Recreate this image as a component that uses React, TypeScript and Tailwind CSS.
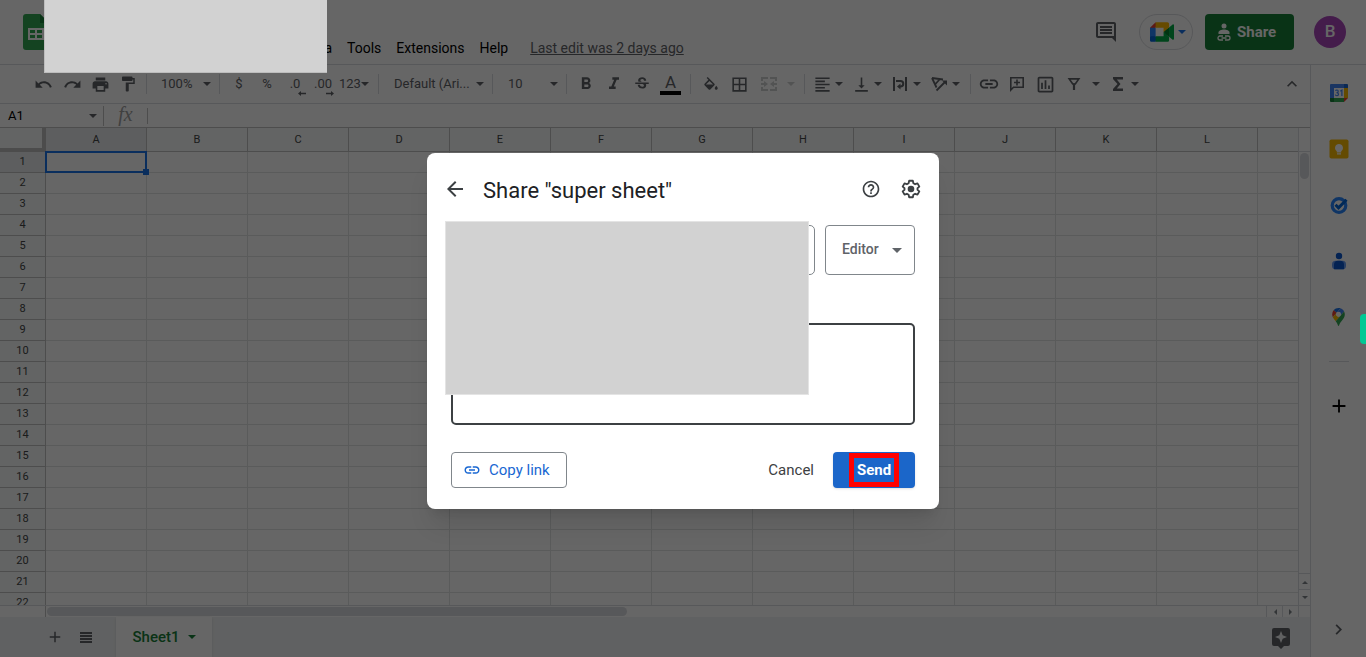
import React from "react";
import {
  MdAdd,
  MdArrowBack,
  MdBorderAll,
  MdChevronRight,
  MdFormatAlignLeft,
  MdFormatBold,
  MdFormatItalic,
  MdFormatPaint,
  MdHelpOutline,
  MdKeyboardArrowUp,
  MdLink,
  MdOutlineInsertChart,
  MdPrint,
  MdRedo,
  MdStrikethroughS,
  MdUndo,
  MdVerticalAlignBottom,
} from "react-icons/md";

const COLUMNS = ["A", "B", "C", "D", "E", "F", "G", "H", "I", "J", "K", "L"];
const ROWS = Array.from({ length: 22 }, (_, i) => i + 1);

function Caret({ className = "" }: { className?: string }) {
  return (
    <svg viewBox="0 0 8 4" className={`h-1 w-2 shrink-0 ${className}`} fill="currentColor" aria-hidden="true">
      <path d="M0 0h8L4 4z" />
    </svg>
  );
}

function SheetsLogo() {
  return (
    <svg viewBox="0 0 26 36" className="h-9 w-[26px]" aria-hidden="true">
      <path fill="#34a853" d="M3 0h14l9 9v24a3 3 0 0 1-3 3H3a3 3 0 0 1-3-3V3a3 3 0 0 1 3-3z" />
      <path fill="#188038" d="M17 0l9 9h-9z" />
      <path fill="#fff" fillRule="evenodd" d="M5 14h16v12H5zm2 2v3h5v-3zm7 0v3h5v-3zm-7 5v3h5v-3zm7 0v3h5v-3z" />
    </svg>
  );
}

function MeetLogo() {
  return (
    <svg viewBox="0 0 87.5 72" className="h-5 w-6" aria-hidden="true">
      <path fill="#00832d" d="M49.5 36l8.53 9.75 11.47 7.33 2-17.02-2-16.64-11.69 6.44z" />
      <path fill="#0066da" d="M0 51.5V66c0 3.315 2.685 6 6 6h14.5l3-10.96-3-9.54-9.95-3z" />
      <path fill="#e94235" d="M20.5 0L0 20.5l10.55 3 9.95-3 2.95-9.41z" />
      <path fill="#2684fc" d="M20.5 20.5H0v31h20.5z" />
      <path fill="#00ac47" d="M82.6 8.68L69.5 19.42v33.66l13.16 10.79c1.97 1.54 4.85.135 4.85-2.37V11c0-2.535-2.945-3.925-4.91-2.32zM49.5 36v15.5h-29V72h43c3.315 0 6-2.685 6-6V53.08z" />
      <path fill="#ffba00" d="M63.5 0h-43v20.5h29V36l20-16.57V6c0-3.315-2.685-6-6-6z" />
    </svg>
  );
}

function CommentHistoryIcon() {
  return (
    <svg viewBox="0 0 24 24" className="size-6" fill="currentColor" aria-hidden="true">
      <path fillRule="evenodd" d="M21.99 4c0-1.1-.89-2-1.99-2H4c-1.1 0-2 .9-2 2v12c0 1.1.9 2 2 2h14l4 4zM20 4v12H4V4zM6 12h12v2H6zm0-3h12v2H6zm0-3h12v2H6z" />
    </svg>
  );
}

function ShareLinkIcon() {
  return (
    <svg viewBox="0 0 14 18" className="h-[18px] w-3.5" fill="none" stroke="currentColor" aria-hidden="true">
      <circle cx="7" cy="3" r="2.5" fill="currentColor" stroke="none" />
      <path fill="currentColor" stroke="none" d="M1.5 11V9.5C1.5 7.6 4.5 6.6 7 6.6s5.5 1 5.5 2.9V11z" />
      <path strokeWidth="1.3" d="M6 13H3a2 2 0 0 0 0 4h3M8 13h3a2 2 0 0 1 0 4H8M4.5 15h5" />
    </svg>
  );
}

function FillIcon() {
  return (
    <svg viewBox="0 0 24 20" className="h-[15px] w-[18px]" fill="currentColor" aria-hidden="true">
      <path d="M16.56 8.94L7.62 0 6.21 1.41l2.38 2.38-5.15 5.15c-.59.59-.59 1.54 0 2.12l5.5 5.5c.29.29.68.44 1.06.44s.77-.15 1.06-.44l5.5-5.5c.59-.58.59-1.53 0-2.12zM5.21 10L10 5.21 14.79 10zM19 11.5s-2 2.17-2 3.5c0 1.1.9 2 2 2s2-.9 2-2c0-1.33-2-3.5-2-3.5z" />
    </svg>
  );
}

function MergeIcon() {
  return (
    <svg viewBox="0 0 18 16" className="h-4 w-[18px]" fill="currentColor" aria-hidden="true">
      <path d="M1 1h7v2H3v2H1zM10 1h7v4h-2V3h-5zM1 11h2v2h5v2H1zM15 11h2v4h-7v-2h5z" />
      <path d="M1 7h3V5l4 3-4 3V9H1zM17 7h-3V5l-4 3 4 3V9h3z" />
    </svg>
  );
}

function WrapIcon() {
  return (
    <svg viewBox="0 0 16 16" className="size-4" fill="none" stroke="currentColor" strokeWidth="2" aria-hidden="true">
      <path d="M2 1v14M14 1v14M4 5h4.5a2.5 2.5 0 0 1 0 5.5H7" />
      <path d="M8.5 7.5v6l-3.5-3z" fill="currentColor" stroke="none" />
    </svg>
  );
}

function RotateIcon() {
  return (
    <svg viewBox="0 0 18 18" className="size-[18px]" fill="none" stroke="currentColor" strokeWidth="1.8" aria-hidden="true">
      <path d="M2 3l11 1.5M2 3l4.5 9.5M9.5 4.5L5 9.5" />
      <path d="M6.5 15.5L15 7" />
      <path d="M12 5.5h5v5z" fill="currentColor" stroke="none" />
    </svg>
  );
}

function AddCommentIcon() {
  return (
    <svg viewBox="0 0 16 16" className="size-4" fill="none" stroke="currentColor" strokeWidth="1.6" aria-hidden="true">
      <path d="M1.8 14V1.8h12.4v9.4H4.5zM8 3.5v6M5 6.5h6" />
    </svg>
  );
}

function FilterIcon() {
  return (
    <svg viewBox="0 0 14 14" className="size-3.5" fill="none" stroke="currentColor" strokeWidth="1.7" aria-hidden="true">
      <path d="M2.2 1.9h9.6L8.3 7H5.7z" />
      <path d="M7 6.5V13" strokeWidth="2.2" />
    </svg>
  );
}

function SumIcon() {
  return (
    <svg viewBox="0 0 12 14" className="h-3.5 w-3" fill="currentColor" aria-hidden="true">
      <path d="M1 0h10v2.5H4.8L8.5 7l-3.7 4.5H11V14H1v-2l4.5-5L1 2z" />
    </svg>
  );
}

function GearIcon() {
  return (
    <svg viewBox="0 0 24 24" className="size-[22px]" fill="none" stroke="currentColor" aria-hidden="true">
      <path
        strokeWidth="2"
        strokeLinejoin="round"
        d="M10 3h4l.6 2.700 1.900 1.100 2.600-.9 2 3.500-2 1.700v1.800l2 1.700-2 3.500-2.600-.9-1.900 1.100L14 21h-4l-.6-2.700-1.900-1.100-2.600.9-2-3.500 2-1.700v-1.800l-2-1.700 2-3.500 2.600.9 1.900-1.100z"
      />
      <circle cx="12" cy="12" r="3.6" fill="currentColor" stroke="none" />
    </svg>
  );
}

function CalendarLogo() {
  return (
    <svg viewBox="0 0 20 20" className="size-5" aria-hidden="true">
      <path fill="#4285f4" d="M2 1h13v4H5v10H1V2a1 1 0 0 1 1-1z" />
      <path fill="#1967d2" d="M15 1h3a1 1 0 0 1 1 1v3h-4z" />
      <path fill="#fbbc04" d="M15 5h4v10h-4z" />
      <path fill="#34a853" d="M5 15h10v4H5z" />
      <path fill="#188038" d="M1 15h4v4H2a1 1 0 0 1-1-1z" />
      <path fill="#ea4335" d="M15 15h4l-4 4z" />
      <path fill="#fff" d="M5 5h10v10H5z" />
      <path fill="none" stroke="#4285f4" strokeWidth="1.2" d="M6.5 7.8c.4-1 2.7-1.2 2.7.4 0 1.1-1 1.5-1.7 1.5 1 0 2 .5 2 1.6 0 1.9-2.8 1.8-3.200.4M11.300 8.200l1.600-1.100v6" />
    </svg>
  );
}

function KeepLogo() {
  return (
    <svg viewBox="0 0 20 20" className="size-5" aria-hidden="true">
      <rect x="0.5" y="0.5" width="19" height="19" rx="1.8" fill="#fbbc04" />
      <path fill="#fff" d="M10 5a4 4 0 0 0-2.200 7.300V13.500h4.400v-1.200A4 4 0 0 0 10 5zM8 14.300h4v1.300H8z" />
    </svg>
  );
}

function TasksLogo() {
  return (
    <svg viewBox="0 0 20 20" className="size-5" fill="none" aria-hidden="true">
      <circle cx="10" cy="10.5" r="6.8" stroke="#2684fc" strokeWidth="3.2" />
      <path d="M6.5 9.8l3 3 8-8" stroke="#0066da" strokeWidth="3" />
    </svg>
  );
}

function ContactsLogo() {
  return (
    <svg viewBox="0 0 20 20" className="size-5" aria-hidden="true">
      <circle cx="10" cy="5" r="3.2" fill="#0b57d0" />
      <rect x="3" y="9.8" width="14" height="8.5" rx="3.5" fill="#669df6" />
      <path fill="#0b57d0" d="M5 18.3v-4.500a4 4 0 0 1 4-4h2a4 4 0 0 1 4 4v4.500z" />
    </svg>
  );
}

function MapsLogo() {
  return (
    <svg viewBox="0 0 92.3 132.3" className="h-[18px] w-[13px]" aria-hidden="true">
      <path fill="#1a73e8" d="M60.2 2.2C55.8.8 51 0 46.1 0 32 0 19.3 6.4 10.8 16.5l21.8 18.3z" />
      <path fill="#ea4335" d="M10.8 16.5C4.1 24.5 0 34.9 0 46.1c0 8.7 1.7 15.7 4.6 22l28-33.3z" />
      <path fill="#4285f4" d="M46.2 28.5c9.8 0 17.7 7.9 17.7 17.7 0 4.3-1.6 8.3-4.2 11.4 0 0 13.9-16.6 27.5-32.7-5.6-10.8-15.3-19-27-22.7L32.6 34.8c3.3-3.8 8.1-6.3 13.6-6.3" />
      <path fill="#fbbc04" d="M46.2 63.8c-9.8 0-17.7-7.9-17.7-17.7 0-4.3 1.5-8.3 4.1-11.3l-28 33.3c4.8 10.6 12.8 19.2 21 29.9l34.1-40.5c-3.3 3.9-8.1 6.3-13.5 6.3" />
      <path fill="#34a853" d="M59.1 109.2c15.4-24.1 33.3-35 33.3-63 0-7.7-1.9-14.9-5.2-21.3L25.6 98c2.6 3.4 5.3 7.3 7.9 11.3 9.4 14.5 6.8 23.1 12.8 23.1s3.4-8.7 12.8-23.2" />
      <circle cx="46.2" cy="46" r="17.7" fill="#fff" />
    </svg>
  );
}

function ToolButton({ label, wide, faded, children }: { label: string; wide?: boolean; faded?: boolean; children: React.ReactNode }) {
  return (
    <button
      type="button"
      aria-label={label}
      className={`flex h-7 shrink-0 items-center justify-center ${wide ? "w-[29px]" : "w-7"} ${faded ? "opacity-30" : ""}`}
    >
      {children}
    </button>
  );
}

function DropButton({ label, children }: { label: string; children: React.ReactNode }) {
  return (
    <button type="button" aria-label={label} className="flex h-7 w-[39px] shrink-0 items-center">
      <span className="flex w-6 items-center justify-center">{children}</span>
      <Caret className="ml-px" />
    </button>
  );
}

function PickerButton({ label, value, wide }: { label: string; value: string; wide?: boolean }) {
  return (
    <button
      type="button"
      aria-label={label}
      className={`flex h-7 shrink-0 items-center justify-between pr-[3px] pl-2.5 ${wide ? "w-[103px]" : "w-[63px]"}`}
    >
      {value}
      <Caret />
    </button>
  );
}

function Divider({ tight }: { tight?: boolean }) {
  return <span className={`h-5 w-px shrink-0 bg-[#dadce0] ${tight ? "mx-1" : "mx-[5px]"}`} />;
}

function Header() {
  return (
    <header className="flex h-[65px] shrink-0 items-start border-b border-[#dadce0] pr-5 pl-[23px]">
      <div className="pt-3.5">
        <SheetsLogo />
      </div>
      <nav className="flex h-[60px] items-end gap-px pl-[247px] text-[14px] leading-6 whitespace-nowrap text-black" aria-label="Menu">
        {["Data", "Tools", "Extensions", "Help"].map((item) => (
          <button type="button" key={item} className="h-6 px-[7px]">
            {item}
          </button>
        ))}
        <a href="#history" className="ml-3.5 h-6 text-[#5f6368] underline">
          Last edit was 2 days ago
        </a>
      </nav>
      <div className="ml-auto flex h-16 items-center text-[#5f6368]">
        <button type="button" aria-label="Comment history" className="mr-[21px]">
          <CommentHistoryIcon />
        </button>
        <button type="button" aria-label="Join a call" className="mr-3 flex h-9 w-[54px] items-center gap-1 rounded-full border border-[#dadce0] pl-2.5 text-[#1a73e8]">
          <MeetLogo />
          <Caret />
        </button>
        <button type="button" className="mr-5 flex h-9 w-[89px] items-center gap-1.5 rounded bg-[#188038] pl-3 text-[15px] font-bold text-white">
          <ShareLinkIcon />
          Share
        </button>
        <button type="button" aria-label="Account" className="flex size-8 items-center justify-center rounded-full bg-[#ab47bc] text-[17px] font-medium text-white">
          B
        </button>
      </div>
    </header>
  );
}

function Toolbar() {
  return (
    <div role="toolbar" className="flex h-[39px] shrink-0 items-center overflow-hidden border-b border-[#dadce0] pr-2 pl-[29px] text-[13px] text-[#5f6368]">
      <ToolButton label="Undo" wide><MdUndo size={19} /></ToolButton>
      <ToolButton label="Redo"><MdRedo size={19} /></ToolButton>
      <ToolButton label="Print"><MdPrint size={19} /></ToolButton>
      <ToolButton label="Paint format"><MdFormatPaint size={18} /></ToolButton>
      <Divider tight />
      <PickerButton label="Zoom" value="100%" />
      <Divider />
      <ToolButton label="Currency">$</ToolButton>
      <ToolButton label="Percent">%</ToolButton>
      <ToolButton label="Fewer decimals">
        <span className="relative">
          .0
          <svg viewBox="0 0 8 5" className="absolute -right-1.5 bottom-0 h-[5px] w-2 translate-y-0.5" fill="currentColor" aria-hidden="true">
            <path d="M0 2.5L3 0v1.7h5v1.6H3V5z" />
          </svg>
        </span>
      </ToolButton>
      <ToolButton label="More decimals">
        <span className="relative">
          .00
          <svg viewBox="0 0 8 5" className="absolute -right-0.5 bottom-0 h-[5px] w-2 translate-y-0.5" fill="currentColor" aria-hidden="true">
            <path d="M8 2.5L5 0v1.7H0v1.6h5V5z" />
          </svg>
        </span>
      </ToolButton>
      <button type="button" className="flex h-7 w-9 shrink-0 items-center pl-0.5">
        123
        <Caret />
      </button>
      <Divider />
      <PickerButton label="Font" value="Default (Ari..." wide />
      <Divider />
      <PickerButton label="Font size" value="10" />
      <Divider />
      <ToolButton label="Bold"><MdFormatBold size={20} /></ToolButton>
      <ToolButton label="Italic"><MdFormatItalic size={20} /></ToolButton>
      <ToolButton label="Strikethrough"><MdStrikethroughS size={18} /></ToolButton>
      <ToolButton label="Text color" wide>
        <span className="flex w-[21px] flex-col items-center border-b-4 border-black text-[17px] leading-[18px]">A</span>
      </ToolButton>
      <Divider />
      <ToolButton label="Fill color" wide><FillIcon /></ToolButton>
      <ToolButton label="Borders" wide><MdBorderAll size={19} /></ToolButton>
      <ToolButton label="Merge cells" wide faded><MergeIcon /></ToolButton>
      <button type="button" aria-label="Merge type" className="flex h-7 w-4 shrink-0 items-center justify-center opacity-30">
        <Caret />
      </button>
      <Divider />
      <DropButton label="Horizontal align"><MdFormatAlignLeft size={19} /></DropButton>
      <DropButton label="Vertical align"><MdVerticalAlignBottom size={19} /></DropButton>
      <DropButton label="Text wrapping"><WrapIcon /></DropButton>
      <DropButton label="Text rotation"><RotateIcon /></DropButton>
      <Divider tight />
      <ToolButton label="Insert link"><MdLink size={22} /></ToolButton>
      <ToolButton label="Insert comment"><AddCommentIcon /></ToolButton>
      <ToolButton label="Insert chart"><MdOutlineInsertChart size={21} /></ToolButton>
      <button type="button" aria-label="Filter" className="flex h-7 w-[47px] shrink-0 items-center justify-between pr-1.5 pl-2">
        <FilterIcon />
        <Caret />
      </button>
      <DropButton label="Functions"><SumIcon /></DropButton>
      <button type="button" aria-label="Hide the menus" className="ml-auto shrink-0">
        <MdKeyboardArrowUp size={20} />
      </button>
    </div>
  );
}

function FormulaBar() {
  return (
    <div className="flex h-6 shrink-0 items-center border-b border-[#c0c0c0] text-[13px]">
      <button type="button" className="flex h-full w-[103px] items-center justify-between pr-1.5 pl-2 text-black">
        A1
        <Caret className="text-[#5f6368]" />
      </button>
      <span className="h-5 w-px bg-[#c0c0c0]" />
      <label htmlFor="formula" className="w-[43px] pb-1 text-center font-['Liberation_Serif',serif] text-[20px] leading-5 text-[#a0a0a0] italic">
        fx
      </label>
      <span className="h-4 w-px bg-[#c0c0c0]" />
      <input id="formula" type="text" className="h-full min-w-0 flex-1 px-2 outline-none" />
    </div>
  );
}

function Grid() {
  return (
    <table className="w-full min-w-[1290px] table-fixed border-separate border-spacing-0 text-[11px] text-[#444746]">
      <colgroup>
        <col className="w-[46px]" />
        {COLUMNS.map((c) => (
          <col key={c} className="w-[101px]" />
        ))}
        <col />
      </colgroup>
      <thead>
        <tr>
          <td className="h-6 border-r-4 border-b-4 border-[#bdbdbd] bg-[#f8f9fa] p-0" />
          {COLUMNS.map((c) => (
            <th
              key={c}
              scope="col"
              className={`h-6 border-r border-b border-[#c0c0c0] p-0 pt-0.5 font-normal ${c === "A" ? "bg-[#e8eaed]" : "bg-[#f8f9fa]"}`}
            >
              {c}
            </th>
          ))}
          <td className="h-6 border-b border-[#c0c0c0] bg-[#f8f9fa] p-0" />
        </tr>
      </thead>
      <tbody>
        {ROWS.map((r) => (
          <tr key={r}>
            <th
              scope="row"
              className={`h-[21px] border-r border-b border-[#c0c0c0] p-0 text-center leading-4 font-normal ${r === 1 ? "bg-[#e8eaed]" : "bg-[#f8f9fa]"}`}
            >
              {r}
            </th>
            {COLUMNS.map((c) =>
              r === 1 && c === "A" ? (
                <td key={c} className="relative h-[21px] border-r border-b border-[#e2e3e3] p-0">
                  <span className="absolute -inset-px border-2 border-[#1a73e8]">
                    <span className="absolute -right-1 -bottom-1 size-1.5 bg-[#1a73e8]" />
                  </span>
                </td>
              ) : (
                <td key={c} className="h-[21px] border-r border-b border-[#e2e3e3] p-0" />
              ),
            )}
            <td className="h-[21px] border-b border-[#e2e3e3] p-0" />
          </tr>
        ))}
      </tbody>
    </table>
  );
}

function ArrowCell({ label, d, tall }: { label: string; d: string; tall?: boolean }) {
  return (
    <button
      type="button"
      aria-label={label}
      className={`flex shrink-0 items-center justify-center border-[#dadce0] text-[#80868b] ${tall ? "h-4 w-full border-t" : "h-full w-4 border-l"}`}
    >
      <svg viewBox="0 0 6 6" className="size-1.5" fill="currentColor" aria-hidden="true">
        <path d={d} />
      </svg>
    </button>
  );
}

function SheetTabs() {
  return (
    <footer className="flex h-10 shrink-0 items-center bg-[#f1f3f4] pr-5 pl-[46px] text-[#5f6368]">
      <button type="button" aria-label="Add sheet"><MdAdd size={18} /></button>
      <button type="button" aria-label="All sheets" className="ml-3.5 w-4">
        <svg viewBox="0 0 12 11" className="mx-auto h-[11px] w-3" fill="currentColor" aria-hidden="true">
          <path d="M0 0h12v2H0zM0 3h12v2H0zM0 6h12v2H0zM0 9h12v2H0z" />
        </svg>
      </button>
      <button type="button" className="ml-[22px] flex h-full w-24 items-center justify-center gap-2 bg-white text-[15px] font-medium text-[#188038] shadow">
        Sheet1
        <Caret />
      </button>
      <button type="button" aria-label="Explore" className="ml-auto pt-0.5">
        <svg viewBox="0 0 18 21" className="h-[21px] w-[18px]" fill="currentColor" aria-hidden="true">
          <path fillRule="evenodd" d="M2 0h14a2 2 0 0 1 2 2v14a2 2 0 0 1-2 2h-4l-3 3-3-3H2a2 2 0 0 1-2-2V2a2 2 0 0 1 2-2zm7 3L7.3 7.3 3 9l4.3 1.7L9 15l1.7-4.3L15 9l-4.3-1.7z" />
        </svg>
      </button>
    </footer>
  );
}

function SidePanel() {
  const apps = [
    { name: "Calendar", logo: <CalendarLogo /> },
    { name: "Keep", logo: <KeepLogo /> },
    { name: "Tasks", logo: <TasksLogo /> },
    { name: "Contacts", logo: <ContactsLogo /> },
    { name: "Maps", logo: <MapsLogo /> },
  ];
  return (
    <aside className="flex w-14 shrink-0 flex-col items-center border-l border-[#dadce0]">
      {apps.map((app) => (
        <button type="button" key={app.name} aria-label={app.name} className="flex h-14 w-full items-center justify-center">
          {app.logo}
        </button>
      ))}
      <span className="my-4 h-px w-5 shrink-0 bg-[#dadce0]" />
      <button type="button" aria-label="Get add-ons" className="flex h-14 w-full items-center justify-center text-black">
        <MdAdd size={22} />
      </button>
      <button type="button" aria-label="Hide side panel" className="mt-auto flex h-14 w-full items-center justify-center text-[#5f6368]">
        <MdChevronRight size={21} />
      </button>
    </aside>
  );
}

function ShareDialog() {
  return (
    <div role="dialog" aria-labelledby="share-title" className="relative w-full max-w-lg rounded-lg bg-white pb-[21px] text-[#3c4043] shadow-xl">
      <div className="flex h-[72px] items-center gap-4 px-4">
        <button type="button" aria-label="Back" className="flex size-6 items-center justify-center">
          <MdArrowBack size={24} />
        </button>
        <h2 id="share-title" className="flex-1 pt-0.5 text-[22px] text-[#202124]">
          Share "super sheet"
        </h2>
        <button type="button" aria-label="Help" className="flex size-6 items-center justify-center">
          <MdHelpOutline size={20} />
        </button>
        <button type="button" aria-label="Settings" className="flex size-6 items-center justify-center">
          <GearIcon />
        </button>
      </div>
      <div className="px-6">
        <div className="flex h-[50px] gap-2.5">
          <input aria-label="Add people and groups" type="text" className="min-w-0 flex-1 rounded-[5px] border border-[#80868b] px-3" />
          <div className="relative w-[90px]">
            <select aria-label="Role" defaultValue="Editor" className="h-full w-full appearance-none rounded-[4px] border border-[#80868b] bg-transparent pb-0.5 pl-4 text-[14px] font-medium text-[#5f6368]">
              <option>Editor</option>
            </select>
            <svg viewBox="0 0 10 5" className="pointer-events-none absolute top-[23px] right-[13px] h-[5px] w-2.5 text-[#5f6368]" fill="currentColor" aria-hidden="true">
              <path d="M0 0h10L5 5z" />
            </svg>
          </div>
        </div>
        <textarea aria-label="Message" className="mt-12 block h-[102px] w-full resize-none rounded-[5px] border-2 border-[#3c4043] p-3" />
        <div className="mt-[27px] flex h-9 items-center text-[15px]">
          <button type="button" className="flex h-full w-[116px] items-center gap-2 rounded-[4px] border border-[#80868b] pl-[11px] text-[#1967d2]">
            <MdLink size={18} />
            Copy link
          </button>
          <button type="button" className="ml-auto h-full px-[19px]">
            Cancel
          </button>
          <button type="button" className="relative h-full w-[82px] rounded-[4px] bg-[#1b66c9] font-bold text-white shadow">
            Send
            <span className="absolute inset-x-4 inset-y-px border-[5px] border-[#ff0000]" />
          </button>
        </div>
      </div>
      <div className="absolute top-[68px] left-[18px] h-[174px] w-[364px] border border-[#e4e4e4] bg-[#d2d2d2]" />
    </div>
  );
}

export default function App() {
  return (
    <div className="relative flex h-screen flex-col overflow-hidden bg-white font-[Roboto,sans-serif]">
      <Header />
      <div className="flex min-h-0 flex-1">
        <main className="flex min-w-0 flex-1 flex-col">
          <Toolbar />
          <FormulaBar />
          <div className="flex min-h-0 flex-1">
            <div className="min-w-0 flex-1 overflow-hidden">
              <Grid />
            </div>
            <div className="flex w-3 shrink-0 flex-col items-center border-l border-[#dadce0]">
              <span className="h-6 w-full shrink-0 border-b border-[#dadce0]" />
              <span className="mt-px mb-auto h-[26px] w-[9px] rounded-full bg-[#dadce0]" />
              <ArrowCell label="Scroll up" d="M0 5h6L3 2z" tall />
              <ArrowCell label="Scroll down" d="M0 1h6L3 4z" tall />
            </div>
          </div>
          <div className="flex h-3 shrink-0 border-t border-[#dadce0]">
            <span className="w-[46px] border-r border-[#c0c0c0]" />
            <span className="my-px ml-px h-[9px] w-[580px] rounded-full bg-[#dadce0]" />
            <span className="flex-1" />
            <ArrowCell label="Scroll left" d="M5 0v6L2 3z" />
            <ArrowCell label="Scroll right" d="M1 0v6l3-3z" />
            <span className="w-3 border-l border-[#dadce0]" />
          </div>
          <SheetTabs />
        </main>
        <SidePanel />
      </div>

      <div className="absolute inset-0 flex items-center justify-center bg-black/60 pt-[5px]">
        <ShareDialog />
      </div>
      <div className="absolute top-0 left-11 h-[73px] w-[283px] border-b border-l border-[#bdbdbd] bg-[#d2d2d2]" />
      <span className="absolute top-[314px] right-0 h-[30px] w-1.5 rounded-l bg-[#00c994]" />
    </div>
  );
}
